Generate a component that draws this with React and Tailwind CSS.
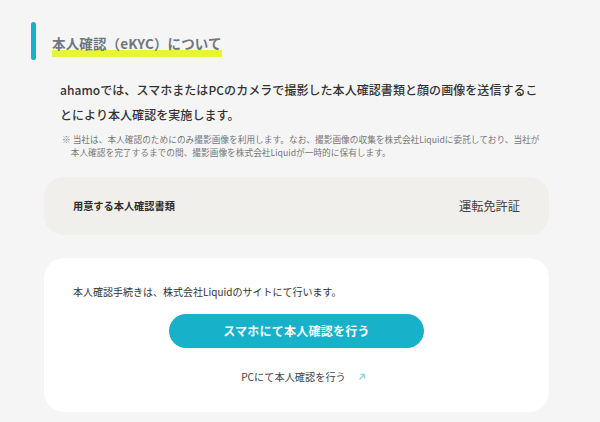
import React from "react";

export default function App() {
  return (
    <div className="w-[600px] h-[422px] overflow-hidden bg-[#f5f5f5] font-['Noto_Sans_CJK_JP','Noto_Sans',sans-serif]">
      <div className="pt-[22px] pl-[31px] flex items-center">
        <div className="w-[5px] h-[38px] rounded-full bg-[#1ab1c8]" />
        <div className="ml-[16px] relative mt-[2px]">
          <div className="absolute left-0 right-0 bottom-[-3px] h-[7px] bg-[#e6f534]" />
          <span className="relative text-[13.5px] font-bold leading-[20px] text-[#6e7680] tracking-[0.01em]">
            本人確認（eKYC）について
          </span>
        </div>
      </div>

      <p className="mt-[17px] ml-[60px] w-[478px] text-[12px] font-medium leading-[25px] text-[#333] tracking-[0.005em]">
        ahamoでは、スマホまたはPCのカメラで撮影した本人確認書類と顔の画像を送信することにより本人確認を実施します。
      </p>

      <p className="mt-[6px] ml-[62px] w-[480px] pl-[1em] -indent-[1em] text-[8.7px] leading-[13px] text-[#777]">
        ※ 当社は、本人確認のためにのみ撮影画像を利用します。なお、撮影画像の収集を株式会社Liquidに委託しており、当社が本人確認を完了するまでの間、撮影画像を株式会社Liquidが一時的に保有します。
      </p>

      <div className="mt-[18px] mx-[44px] w-[505px] h-[58px] rounded-[20px] bg-[#f1efec] flex items-center justify-between pl-[29px] pr-[29px]">
        <span className="text-[10.2px] font-bold text-[#2e2e2e]">用意する本人確認書類</span>
        <span className="text-[12.2px] text-[#444]">運転免許証</span>
      </div>

      <div className="mt-[23px] mx-[44px] w-[505px] h-[154px] rounded-[20px] bg-white pt-[27px] flex flex-col">
        <p className="pl-[29px] text-[10px] leading-[14px] text-[#333]">
          本人確認手続きは、株式会社Liquidのサイトにて行います。
        </p>
        <div className="mt-[15px] flex justify-center">
          <div className="w-[255px] h-[34px] rounded-full bg-[#17b1c9] flex items-center justify-center text-white text-[12px] font-bold tracking-[0.02em]">
            スマホにて本人確認を行う
          </div>
        </div>
        <div className="mt-[22px] flex justify-center items-center gap-[12px] pl-[14px]">
          <span className="text-[10.2px] leading-[14px] text-[#444]">PCにて本人確認を行う</span>
          <svg width="8" height="8" viewBox="0 0 8 8" fill="none" stroke="#8fd6df" strokeWidth="1.4">
            <path d="M1.5 6.5 L6.5 1.5" />
            <path d="M2.5 1.5 H6.5 V5.5" />
          </svg>
        </div>
      </div>
    </div>
  );
}
